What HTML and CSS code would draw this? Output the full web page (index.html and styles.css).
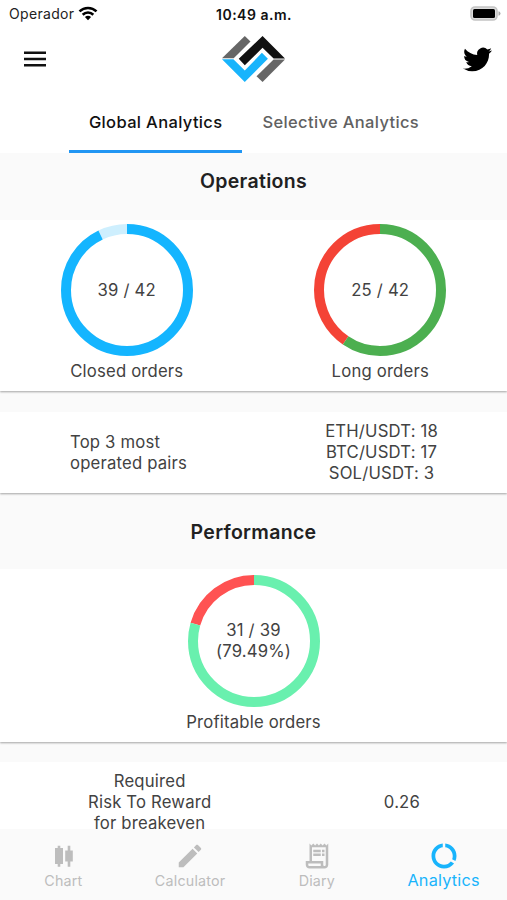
FILE: index.html
```html
<!DOCTYPE html>
<html lang="en">
<head>
<meta charset="utf-8">
<title>Analytics</title>
<link rel="stylesheet" href="styles.css">
</head>
<body>
<div class="app">
  <header class="status">
    <div class="carrier"><span>Operador</span>
      <svg width="20" height="15" viewBox="0 0 20 15" fill="none" stroke="#000" stroke-width="2.6"><path d="M1.5 5.4a12.2 12.2 0 0 1 17 0M4.7 8.7a7.6 7.6 0 0 1 10.6 0"/><path d="M10 14.2 6.9 11.1a4.5 4.5 0 0 1 6.2 0z" fill="#000" stroke="none"/></svg>
    </div>
    <time>10:49 a.m.</time>
    <svg class="battery" width="32" height="16" viewBox="0 0 32 16"><rect x="1" y="1" width="26" height="13" rx="4" fill="#ddd" stroke="#c4c4c4" stroke-width="1.6"/><rect x="3" y="3" width="22" height="9" rx="1.5" fill="#000"/><path d="M28.5 5.2v4.6q2-.6 2-2.3t-2-2.3z" fill="#aaa"/></svg>
  </header>
  <div class="appbar">
    <svg class="menu" width="22" height="16" viewBox="0 0 22 16"><path d="M0 1.8h22M0 8h22M0 14.2h22" stroke="#111" stroke-width="2.5"/></svg>
    <svg class="logo" width="63" height="46" viewBox="24 20 188 137"><path d="M24 86 92 20l17 16-50 50z" fill="#666"/><path d="M212 90h-34l-51 50 18 17z" fill="#666"/><path d="M74 88 145 20l67 67h-34l-33-32-53 52z" fill="#111"/><path d="M24 89h34l34 34 51-53 18 18-69 69z" fill="#18b4fc"/></svg>
    <svg class="bird" width="29" height="29" viewBox="0 0 24 24"><path d="M23.953 4.57a10 10 0 01-2.825.775 4.958 4.958 0 002.163-2.723c-.951.555-2.005.959-3.127 1.184a4.92 4.92 0 00-8.384 4.482C7.69 8.095 4.067 6.13 1.64 3.162a4.822 4.822 0 00-.666 2.475c0 1.71.87 3.213 2.188 4.096a4.904 4.904 0 01-2.228-.616v.06a4.923 4.923 0 003.946 4.827 4.996 4.996 0 01-2.212.085 4.936 4.936 0 004.604 3.417 9.867 9.867 0 01-6.102 2.105c-.39 0-.779-.023-1.17-.067a13.995 13.995 0 007.557 2.209c9.053 0 13.998-7.496 13.998-13.985 0-.21 0-.42-.015-.63A9.935 9.935 0 0024 4.59z"/></svg>
  </div>
  <div class="tabs">
    <div class="tab active">Global Analytics</div>
    <div class="tab">Selective Analytics</div>
  </div>
  <main>
    <h2>Operations</h2>
    <section class="card charts">
      <div class="chart">
        <div class="ring"><svg viewBox="0 0 132 132"><circle class="cyan-light" cx="66" cy="66" r="61" pathLength="42" stroke-dasharray="0 39 3"/><circle class="cyan" cx="66" cy="66" r="61" pathLength="42" stroke-dasharray="39 42"/></svg><span>39 / 42</span></div>
        <p>Closed orders</p>
      </div>
      <div class="chart">
        <div class="ring"><svg viewBox="0 0 132 132"><circle class="red" cx="66" cy="66" r="61" pathLength="42" stroke-dasharray="17 25" stroke-dashoffset="17"/><circle class="green" cx="66" cy="66" r="61" pathLength="42" stroke-dasharray="25 42"/></svg><span>25 / 42</span></div>
        <p>Long orders</p>
      </div>
    </section>
    <section class="card pairs">
      <p class="left">Top 3 most<br>operated pairs</p>
      <p>ETH/USDT: 18<br>BTC/USDT: 17<br>SOL/USDT: 3</p>
    </section>
    <h2 class="second">Performance</h2>
    <section class="card charts perf">
      <div class="chart">
        <div class="ring"><svg viewBox="0 0 132 132"><circle class="coral" cx="66" cy="66" r="61" pathLength="39" stroke-dasharray="8 31" stroke-dashoffset="8"/><circle class="mint" cx="66" cy="66" r="61" pathLength="39" stroke-dasharray="31 39"/></svg><span>31 / 39<br>(79.49%)</span></div>
        <p>Profitable orders</p>
      </div>
    </section>
    <section class="card risk">
      <p>Required<br>Risk To Reward<br>for breakeven</p>
      <p class="value">0.26</p>
    </section>
  </main>
  <nav>
    <div class="item"><svg viewBox="0 0 30 30"><path d="M7 7h8v16H7zM9.7 4.7h2.6v21H9.7zM17.2 9.5h7.6v11h-7.6zM19.7 4.7h2.6v21h-2.6z"/></svg><span>Chart</span></div>
    <div class="item"><svg viewBox="0 0 24 24"><path d="M3 17.25V21h3.75L17.81 9.94l-3.75-3.75zM20.71 7.04c.39-.39.39-1.02 0-1.41l-2.34-2.34c-.39-.39-1.02-.39-1.41 0l-1.83 1.83 3.75 3.75z"/></svg><span>Calculator</span></div>
    <div class="item"><svg viewBox="0 0 24 24"><path d="M19.5 3.5 18 2l-1.5 1.5L15 2l-1.5 1.5L12 2l-1.5 1.5L9 2 7.5 3.5 6 2v14H3v3c0 1.66 1.34 3 3 3h12c1.66 0 3-1.34 3-3V2zM15 20H6c-.55 0-1-.45-1-1v-1h10zm4-1c0 .55-.45 1-1 1s-1-.45-1-1v-3H8V5h11zM9 7h6v2H9zM16 7h2v2h-2zM9 10h6v2H9zM16 10h2v2h-2z"/></svg><span>Diary</span></div>
    <div class="item current"><svg viewBox="0 0 24 24"><path d="M13 2.05v3.03c3.39.49 6 3.39 6 6.92 0 .9-.18 1.75-.48 2.54l2.6 1.53c.56-1.24.88-2.62.88-4.07 0-5.18-3.95-9.45-9-9.95zM12 19c-3.87 0-7-3.13-7-7 0-3.53 2.61-6.43 6-6.92V2.05c-5.06.5-9 4.76-9 9.95 0 5.52 4.47 10 9.99 10 3.31 0 6.24-1.61 8.06-4.09l-2.6-1.53C16.17 17.98 14.21 19 12 19z"/></svg><span>Analytics</span></div>
  </nav>
</div>
</body>
</html>
```
FILE: styles.css
```css
* { box-sizing: border-box; }
body { margin: 0; font-family: Inter, "Liberation Sans", sans-serif; color: #424242; }
p, h2 { margin: 0; }
svg { display: block; flex: none; }
.app { width: 507px; height: 900px; display: flex; flex-direction: column; overflow: hidden; background: #fff; }
.status { height: 28px; flex: none; display: grid; grid-template-columns: 1fr auto 1fr; align-items: center; padding: 0 5px 0 9px; font-size: 14px; color: #222; }
.carrier { display: flex; align-items: center; gap: 4px; margin-top: -2px; letter-spacing: 0.32px; }
.status time { font-weight: 600; color: #111; letter-spacing: 0.5px; margin-left: -3px; }
.battery { justify-self: end; }
.appbar { height: 64px; flex: none; display: grid; grid-template-columns: 1fr auto 1fr; align-items: center; padding: 0 15px 2px 24px; }
.logo { margin-left: -9px; }
.bird { justify-self: end; }
.tabs { height: 61px; flex: none; display: flex; justify-content: center; padding-left: 1px; }
.tab { height: 61px; padding: 0 20px; font-size: 16.5px; font-weight: 500; line-height: 60px; letter-spacing: 0.35px; color: #616161; white-space: nowrap; }
.tab.active { color: #111; border-bottom: 3px solid #2196f3; }
main { flex: 1; min-height: 0; overflow: hidden; background: #fafafa; }
h2 { height: 67px; padding-top: 16px; text-align: center; font-size: 19.5px; line-height: 25px; font-weight: 600; letter-spacing: 0.3px; color: #212121; }
h2.second { height: 76px; padding-top: 27px; }
.card { background: #fff; box-shadow: 0 1px 2px rgba(0, 0, 0, 0.35); font-size: 16.7px; line-height: 20.8px; letter-spacing: 0.18px; clip-path: inset(0 0 -4px 0); }
.charts { height: 171px; display: flex; padding-top: 4px; margin-bottom: 21px; }
.perf { height: 173px; padding-top: 6px; margin-bottom: 20px; }
.chart { flex: 1; display: flex; flex-direction: column; align-items: center; gap: 5px; }
.ring { width: 132px; height: 132px; display: grid; place-items: center; text-align: center; }
.ring > * { grid-area: 1 / 1; }
.ring svg { width: 132px; height: 132px; transform: rotate(-90deg); fill: none; stroke-width: 10; }
.cyan-light { stroke: #ceeffe; }
.cyan { stroke: #14b5ff; }
.red { stroke: #f44336; }
.green { stroke: #4caf50; }
.coral { stroke: #ff5252; }
.mint { stroke: #69f0ae; }
.pairs { height: 81px; display: flex; align-items: center; justify-content: space-between; padding: 0 69px 0 70px; text-align: center; }
.pairs .left { text-align: left; }
.risk { height: 81px; display: flex; align-items: center; justify-content: space-between; padding: 0 87px 0 88px; text-align: center; }
nav { height: 71px; flex: none; display: grid; grid-template-columns: repeat(4, 1fr); background: #fafafa; color: #bdbdbd; }
.item { display: flex; flex-direction: column; align-items: center; padding-top: 12px; font-size: 14.3px; line-height: 20px; letter-spacing: 0.2px; }
.item svg { width: 30px; height: 30px; fill: currentColor; }
.current { color: #18b4fc; font-size: 16.3px; line-height: 19px; }
```
